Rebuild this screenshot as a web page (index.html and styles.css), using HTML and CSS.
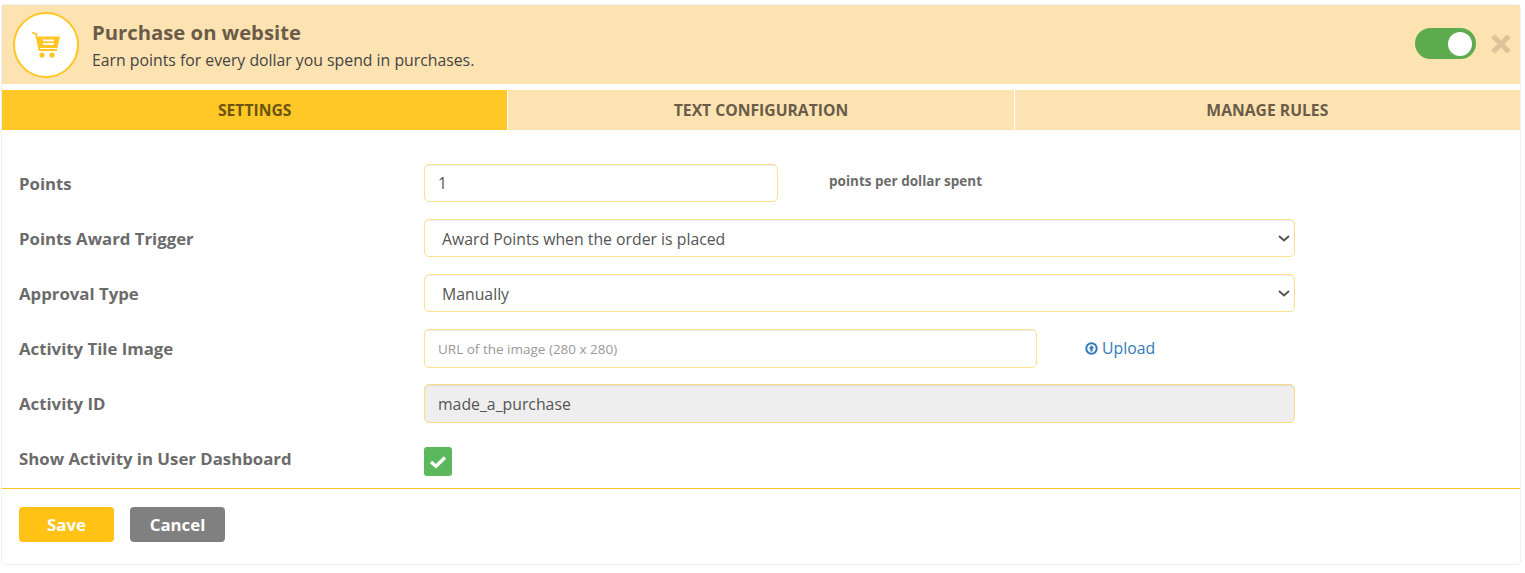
FILE: index.html
```html
<!DOCTYPE html>
<html lang="en">
<head>
  <meta charset="UTF-8" />
  <title>Purchase on website</title>
  <link rel="stylesheet" href="styles.css">
</head>
<body>

  <div class="panel">

    <!-- Header -->
    <div class="activity-head">
      <div class="activity-icon">
        <svg width="30" height="28" viewBox="0 0 30 28">
          <path d="M1 1.5 L5 3 L8.5 19 H26" fill="none" stroke="#ffc524" stroke-width="1.8"/>
          <path d="M5.5 5.5 H29 L26.5 17 H8 Z" fill="#ffc524"/>
          <rect x="12" y="8.5" width="11" height="1.8" fill="#fff"/>
          <rect x="12" y="12" width="11" height="1.8" fill="#fff"/>
          <circle cx="11" cy="24" r="2.6" fill="#ffc524"/>
          <circle cx="21" cy="24" r="2.6" fill="#ffc524"/>
        </svg>
      </div>
      <div class="activity-text">
        <h3>Purchase on website</h3>
        <p>Earn points for every dollar you spend in purchases.</p>
      </div>
      <div class="activity-actions">
        <span class="toggle"><span class="toggle-knob"></span></span>
        <svg class="close-icon" width="20" height="20" viewBox="0 0 20 20">
          <path d="M2 2 L18 18 M18 2 L2 18" stroke="#dcc49a" stroke-width="5" fill="none"/>
        </svg>
      </div>
    </div>

    <!-- Tabs -->
    <div class="tabs">
      <div class="tab active">SETTINGS</div>
      <div class="tab">TEXT CONFIGURATION</div>
      <div class="tab">MANAGE RULES</div>
    </div>

    <!-- Form -->
    <form class="settings-form">
      <div class="row">
        <label>Points</label>
        <input class="field field-small" type="text" value="1">
        <span class="hint">points per dollar spent</span>
      </div>
      <div class="row">
        <label>Points Award Trigger</label>
        <select class="field field-select field-wide">
          <option>Award Points when the order is placed</option>
        </select>
      </div>
      <div class="row">
        <label>Approval Type</label>
        <select class="field field-select field-wide">
          <option>Manually</option>
        </select>
      </div>
      <div class="row">
        <label>Activity Tile Image</label>
        <input class="field field-medium" type="text" placeholder="URL of the image (280 x 280)">
        <a class="upload" href="#">
          <svg width="13" height="13" viewBox="0 0 13 13">
            <circle cx="6.5" cy="6.5" r="5.2" fill="none" stroke="#337ab7" stroke-width="2"/>
            <path d="M6.5 3.2 L9.4 6.6 H7.6 V9.6 H5.4 V6.6 H3.6 Z" fill="#337ab7"/>
          </svg>
          Upload
        </a>
      </div>
      <div class="row">
        <label>Activity ID</label>
        <input class="field field-wide field-disabled" type="text" value="made_a_purchase" readonly>
      </div>
      <div class="row row-check">
        <label>Show Activity in User Dashboard</label>
        <span class="check">
          <svg width="18" height="14" viewBox="0 0 18 14">
            <path d="M2 7 L7 11.2 L16 2.5" fill="none" stroke="#fff" stroke-width="3.4"/>
          </svg>
        </span>
      </div>
    </form>

    <div class="form-footer">
      <button type="button" class="btn btn-save">Save</button>
      <button type="button" class="btn btn-cancel">Cancel</button>
    </div>

  </div>

</body>
</html>
```

FILE: styles.css
```css
* {
  box-sizing: border-box;
}
body {
  margin: 0;
  padding: 4px 4px 0 1px;
  font-family: "Open Sans", sans-serif;
  background: #fff;
  color: #666;
}
.panel {
  border: 1px solid #f1f1f1;
  border-radius: 4px;
  height: 561px;
}
.activity-head {
  display: flex;
  align-items: center;
  height: 79px;
  padding: 0 9px 0 11px;
  background: #fee3b2;
}
.activity-icon {
  display: flex;
  align-items: center;
  justify-content: center;
  width: 66px;
  height: 66px;
  border: 2px solid #ffc524;
  border-radius: 50%;
  background: #fff;
}
.activity-text {
  margin: 2px 0 0 13px;
}
.activity-text h3 {
  margin: -1px 0 0;
  font-size: 20.3px;
  line-height: 26px;
  font-weight: 700;
  color: #6a5c49;
}
.activity-text p {
  margin: 4px 0 0;
  font-size: 15.8px;
  line-height: 22px;
  color: #444;
}
.activity-actions {
  display: flex;
  align-items: center;
  margin-left: auto;
}
.toggle {
  display: flex;
  align-items: center;
  justify-content: flex-end;
  width: 61px;
  height: 31px;
  margin-top: -2px;
  padding-right: 4px;
  border-radius: 16px;
  background: #5cab4d;
}
.toggle-knob {
  width: 24px;
  height: 24px;
  border-radius: 50%;
  background: #fff;
}
.close-icon {
  margin: -2px 0 0 15px;
}
.tabs {
  display: flex;
  margin-top: 6px;
}
.tab {
  flex: 1;
  height: 40px;
  line-height: 40px;
  text-align: center;
  font-size: 15.7px;
  font-weight: 700;
  color: #6a5c49;
  background: #fee3b2;
  border-left: 1px solid #fff;
}
.tab:first-child {
  border-left: 0;
}
.tab.active {
  background: #ffc826;
  color: #6b5410;
}
.settings-form {
  padding: 34px 0 0 17px;
}
.row {
  display: flex;
  align-items: center;
  height: 38px;
  margin-bottom: 17px;
}
.row label {
  width: 405px;
  flex: none;
  font-size: 16.8px;
  font-weight: 700;
  color: #6b6b6b;
}
.field {
  height: 38px;
  padding: 0 13px;
  border: 1px solid #fddf8e;
  border-radius: 5px;
  background: #fff;
  box-shadow: inset 0 1px 1px rgba(0,0,0,0.075);
  font-family: "Open Sans", sans-serif;
  font-size: 15.8px;
  color: #555;
}
.field::placeholder {
  font-size: 13.5px;
  color: #999;
}
.field-select {
  appearance: none;
  padding: 2px 13px 0 17px;
  background-image: url("data:image/svg+xml,%3Csvg xmlns='http://www.w3.org/2000/svg' width='12' height='7'%3E%3Cpath d='M1 1 L6 5.5 L11 1' fill='none' stroke='%23555' stroke-width='2'/%3E%3C/svg%3E");
  background-repeat: no-repeat;
  background-position: right 4px center;
}
.field-small {
  width: 354px;
}
.field-medium {
  width: 613px;
  height: 39px;
  margin-top: 1px;
  padding-bottom: 2px;
}
.field-wide {
  width: 871px;
}
.field-disabled {
  height: 39px;
  margin-top: 1px;
  background: #eee;
  border-color: #fbdc85;
}
.hint {
  margin: -4px 0 0 51px;
  font-size: 13.5px;
  font-weight: 700;
  color: #6b6b6b;
}
.upload {
  display: inline-flex;
  align-items: center;
  gap: 4px;
  margin: 0 0 0 48px;
  font-size: 15.8px;
  color: #337ab7;
  text-decoration: none;
}
.row-check {
  height: 29px;
  margin: 25px 0 0;
}
.row-check label {
  margin-top: -6px;
}
.check {
  display: flex;
  align-items: center;
  justify-content: center;
  width: 28px;
  height: 29px;
  border-radius: 3px;
  background: #5cb85c;
}
.form-footer {
  display: flex;
  gap: 16px;
  margin-top: 12px;
  padding: 18px 0 0 17px;
  border-top: 1px solid #ffc524;
}
.btn {
  width: 95px;
  height: 35px;
  border: 0;
  border-radius: 4px;
  font-family: "Open Sans", sans-serif;
  font-size: 16.8px;
  font-weight: 700;
  color: #fff;
}
.btn-save {
  background: #ffc215;
}
.btn-cancel {
  background: #808080;
}
```
